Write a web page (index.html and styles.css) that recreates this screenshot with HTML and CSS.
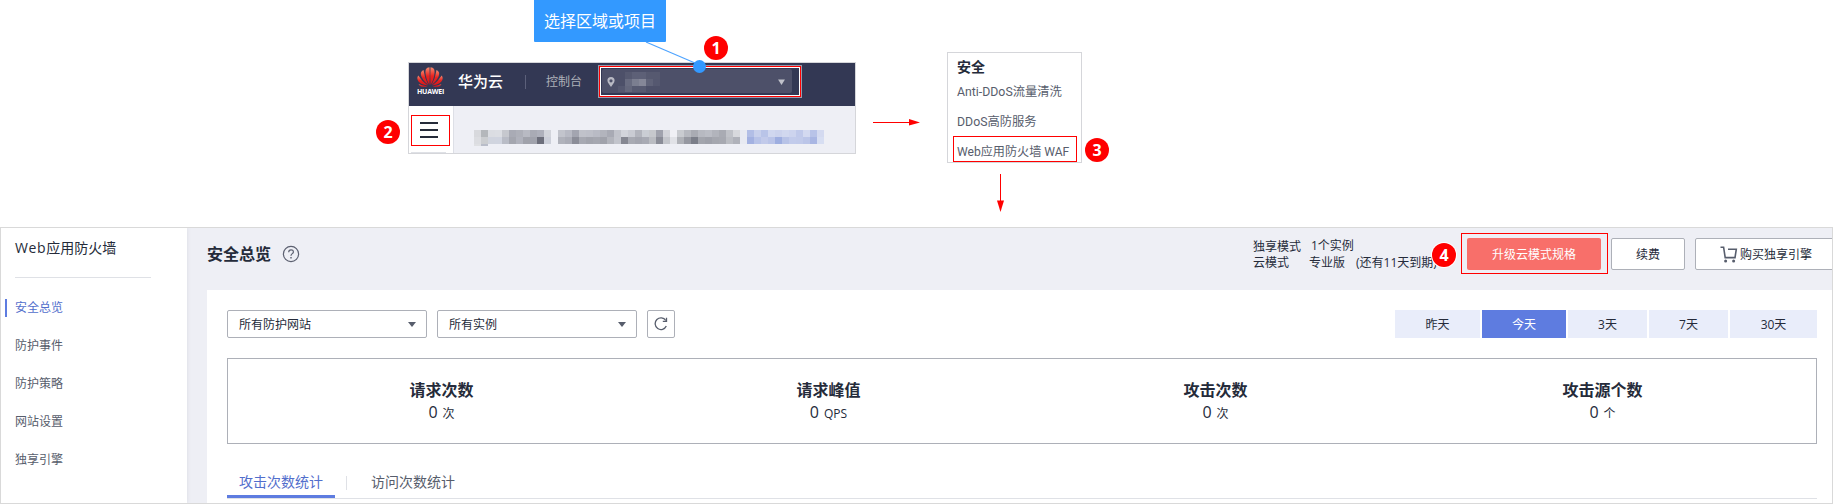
FILE: index.html
```html
<!DOCTYPE html>
<html lang="zh-CN">
<head>
<meta charset="utf-8">
<title>Web应用防火墙</title>
<link rel="stylesheet" href="styles.css">
</head>
<body>
<section class="guide">
  <div class="console">
    <header class="console-bar">
      <div class="brand">
        <svg class="petals" width="26" height="20" viewBox="0 0 26 20">
          <defs><linearGradient id="red" x1="0" y1="0" x2="0" y2="1"><stop offset="0" stop-color="#f58a70"/><stop offset=".5" stop-color="#e8231f"/><stop offset="1" stop-color="#d8151b"/></linearGradient></defs>
          <g fill="url(#red)">
            <path d="M12.4 18C9 12 7.600 5 9 2Q10 .4 12.500 .3Q13 10 12.400 18Z"/>
            <path d="M13.600 18C17 12 18.400 5 17 2Q16 .4 13.500 .3Q13 10 13.600 18Z"/>
            <path d="M11.500 18.200C6.500 14 3 9 4 5.500Q4.700 3.600 6.500 3Q7.500 11 11.500 18.200Z"/>
            <path d="M14.500 18.200C19.500 14 23 9 22 5.500Q21.300 3.600 19.500 3Q18.500 11 14.500 18.200Z"/>
            <path d="M10.800 18.600C4 17.500 .2 14.500 .3 11Q.4 9.500 1.300 8.500Q5 14.500 10.800 18.600Z"/>
            <path d="M15.200 18.600C22 17.500 25.800 14.500 25.700 11Q25.600 9.500 24.700 8.500Q21 14.500 15.200 18.600Z"/>
            <path d="M10.500 19.200C6 20.300 3 20 1.600 17.200Q6 18.800 10.500 19.200Z"/>
            <path d="M15.500 19.200C20 20.300 23 20 24.400 17.200Q20 18.800 15.500 19.200Z"/>
          </g>
        </svg>
        <span class="brand-name">HUAWEI</span>
      </div>
      <b class="cloud">华为云</b>
      <i class="bar-line"></i>
      <span class="console-link">控制台</span>
      <div class="region-frame">
        <div class="region">
          <svg width="8" height="10" viewBox="0 0 8 10"><path fill="#b9bac4" fill-rule="evenodd" d="M4 0a3.600 3.600 0 0 0-3.600 3.600C.4 6 2.800 8 4 10c1.200-2 3.600-4 3.600-6.400A3.600 3.600 0 0 0 4 0Zm0 2.200a1.600 1.600 0 1 1 0 3.200a1.600 1.600 0 0 1 0-3.200Z"/></svg>
          <svg class="region-blur" width="42" height="20" viewBox="0 0 42 20">
            <path fill="#565970" d="M7 0h35v7H7z"/><path fill="#5d6077" d="M14 0h14v7H14z"/>
            <path fill="#686b80" d="M7 7h7v7H7z"/><path fill="#7b7e90" d="M14 7h7v7h-7z"/><path fill="#858798" d="M21 7h7v7h-7z"/><path fill="#5f6278" d="M28 7h7v7h-7z"/><path fill="#555870" d="M35 7h7v7h-7zM0 14h7v6H0z"/><path fill="#64677c" d="M7 14h7v6H7z"/><path fill="#575a71" d="M14 14h14v6H14z"/>
          </svg>
          <svg class="region-caret" width="8" height="7" viewBox="0 0 8 7"><path fill="#c0c1ca" d="M0 .5h8L4 7z"/></svg>
        </div>
      </div>
    </header>
    <div class="console-body">
      <div class="console-side">
        <div class="menu"><i></i><i></i><i></i></div>
        <div class="side-line"></div>
      </div>
      <div class="console-main"><svg id="mosaic" width="350" height="16"></svg></div>
    </div>
  </div>

  <svg class="arrow-right" width="47" height="8" viewBox="0 0 47 8"><path d="M0 4.500h37" stroke="#f00"/><path d="M36 1l11 3.500L36 7.500z" fill="#f00"/></svg>

  <div class="service">
    <div class="service-card">
      <b>安全</b>
      <span>Anti-DDoS流量清洗</span>
      <span>DDoS高防服务</span>
      <span class="picked">Web应用防火墙 WAF</span>
    </div>
    <svg class="arrow-down" width="8" height="38" viewBox="0 0 8 38"><path d="M4.500 0v28" stroke="#f00"/><path d="M1 26.500h7L4.500 38z" fill="#f00"/></svg>
  </div>

  <div class="callout">选择区域或项目</div>
  <svg class="pointer" width="64" height="34" viewBox="0 0 64 34"><path d="M1 2L50 23" stroke="#4da3ff" stroke-width="1.100"/><circle cx="54.500" cy="26.500" r="6.500" fill="#39f"/></svg>
  <span class="badge one">1</span>
  <span class="badge two">2</span>
  <span class="badge three">3</span>
</section>

<section class="app">
  <nav class="side">
    <h2><span>Web</span>应用防火墙</h2>
    <a class="on">安全总览</a><a>防护事件</a><a>防护策略</a><a>网站设置</a><a>独享引擎</a>
  </nav>
  <main class="main">
    <header class="top">
      <h1>安全总览</h1>
      <svg class="help" width="18" height="18" viewBox="0 0 18 18" fill="none" stroke="#5c6070" stroke-width="1.200"><circle cx="9" cy="9" r="7.600"/><path d="M6.700 7.200c0-3.200 4.700-3.100 4.700-.3c0 1.800-2.400 1.700-2.400 3.800"/><path d="M9 12v1.400" stroke-width="1.400"/></svg>
      <div class="plan">
        <div class="plan-row up"><span>独享模式</span><em>1个实例</em></div>
        <div class="plan-row"><span>云模式</span><em>专业版</em><em>(还有11天到期)</em></div>
        <span class="badge four">4</span>
      </div>
      <div class="upgrade-frame"><button class="upgrade">升级云模式规格</button></div>
      <button class="btn renew">续费</button>
      <button class="btn buy"><svg width="18" height="17" viewBox="0 0 18 17" fill="none" stroke="#575d6c" stroke-width="1.600"><path d="M.5 1.200H3.600L5.200 11.600H15L16.300 3.300H8"/><g fill="#575d6c" stroke="none"><circle cx="5.600" cy="15" r="1.500"/><circle cx="13.600" cy="15" r="1.500"/></g></svg>购买独享引擎</button>
    </header>
    <div class="panel">
      <div class="filters">
        <div class="select">所有防护网站<i></i></div>
        <div class="select">所有实例<i></i></div>
        <div class="refresh"><svg width="14" height="14" viewBox="0 0 14 14" fill="none" stroke="#575d6c" stroke-width="1.300"><path d="M11.800 3.500A5.800 5.800 0 1 0 12.300 9"/><path d="M12.500 .8V4.300H8.800"/></svg></div>
        <div class="days"><span>昨天</span><span class="on">今天</span><span>3天</span><span>7天</span><span>30天</span></div>
      </div>
      <div class="stats">
        <div><b>请求次数</b><p>0<small>次</small></p></div>
        <div><b>请求峰值</b><p>0<small>QPS</small></p></div>
        <div><b>攻击次数</b><p>0<small>次</small></p></div>
        <div><b>攻击源个数</b><p>0<small>个</small></p></div>
      </div>
      <div class="tabs"><span class="on">攻击次数统计</span><i></i><span>访问次数统计</span></div>
    </div>
  </main>
</section>
<script src="mosaic.js"></script>
</body>
</html>
```
FILE: styles.css
```css
* { box-sizing: border-box; }
body {
  margin: 0; width: 1833px; height: 504px; overflow: hidden; background: #fff;
  font: 12px/16px "Open Sans", "Noto Sans CJK SC", sans-serif; color: #252b3a;
  display: flex; flex-direction: column;
}
svg { display: block; flex: none; }
h1, h2, p { margin: 0; }
em { font-style: normal; }
button { font: inherit; padding: 0; }

/* Steps */
.guide { position: relative; height: 227px; display: flex; padding-left: 408px; align-items: flex-start; }
.console { width: 448px; height: 92px; margin-top: 62px; border: 1px solid #d5d6da; display: flex; flex-direction: column; }
.console-bar { height: 43px; background: #333854; display: flex; padding-left: 8px; color: #fff; flex: none; }
.brand { width: 27px; margin-top: 4px; }
.brand-name { display: block; font: bold 7px/8px "Open Sans", sans-serif; letter-spacing: -.25px; margin-top: 1px; }
.cloud { margin: 8px 1px 0 14px; font-size: 15px; line-height: 20px; width: 46px; font-weight: 500; }
.bar-line { width: 1px; height: 14px; background: #5c607a; margin: 12px 20px 0; }
.console-link { color: #adb0b8; margin-top: 11px; width: 37px; }
.region-frame { width: 204px; height: 33px; margin: 2px 0 0 15px; border: 1px solid #989bac; display: flex; padding: 3px; box-shadow: inset 0 0 0 1px #f00, inset 0 0 0 2px #fff; }
.region { width: 190px; height: 24px; background: #4d5069; border-radius: 2px; display: flex; align-items: center; padding: 1px 7px 0 5px; }
.region-blur { margin: 0 auto 0 3px; }
.region-caret { width: 7px; height: 6px; }
.console-body { flex: 1; display: flex; background: #eeeff5; }
.console-side { width: 45px; background: #fff; border-right: 1px solid #dddfe6; padding: 9px 0 0 2px; display: flex; flex-direction: column; }
.menu { width: 39px; height: 31px; border: 1px solid #f00; display: flex; flex-direction: column; gap: 5px; padding: 6px 0 0 8px; }
.menu i { width: 18px; height: 2px; background: #252b3a; }
.side-line { width: 35px; height: 1px; background: #dfe1e6; margin-top: 6px; }
.console-main { padding: 24px 0 0 20px; }
.arrow-right { margin: 118px 27px 0 17px; }
.service { margin-top: 52px; }
.service-card { width: 135px; height: 111px; border: 1px solid #d5d6da; display: flex; flex-direction: column; font-family: Roboto, "Noto Sans CJK SC", sans-serif; color: #575d6c; padding-left: 5px; white-space: nowrap; }
.service-card b { font-size: 14px; line-height: 20px; color: #252b3a; margin: 4px 0 4px 4px; }
.service-card span { font-size: 12.3px; line-height: 22px; height: 22px; margin: 0 0 8px 4px; }
.service-card .picked { border: 1px solid #f00; width: 124px; height: 26px; line-height: 24px; margin: -5px 0 0; padding: 3px 0 0 3px; font-size: 12.1px; }
.arrow-down { margin: 11px 0 0 49px; }
.callout { position: absolute; left: 534px; top: 0; width: 132px; height: 42px; background: #39f; color: #fff; font: 16px/41px "Noto Sans CJK SC", sans-serif; text-align: center; border-radius: 0 0 1px 1px; }
.pointer { position: absolute; left: 645px; top: 40px; }
.badge { position: absolute; width: 24px; height: 24px; border-radius: 50%; background: #f00; color: #fff; font: bold 16px/25px "Open Sans", sans-serif; text-align: center; }
.one { left: 704px; top: 36px; }
.two { left: 376px; top: 120px; }
.three { left: 1085px; top: 138px; }

/* Application */
.app { height: 277px; border: 1px solid #d9d9d9; display: flex; overflow: hidden; }
.side { width: 186px; flex: none; background: #fff; display: flex; flex-direction: column; box-shadow: 0 0 4px #d8dae2; z-index: 1; }
.side h2 { font-size: 14px; line-height: 20px; font-weight: 400; margin: 10px 0 21px 14px; padding-bottom: 19px; width: 136px; border-bottom: 1px solid #dfe1e6; }
.side h2 span { letter-spacing: .6px; }
.side a { height: 18px; line-height: 18px; color: #575d6c; margin: 0 0 20px 4px; padding-left: 8px; border-left: 2px solid transparent; }
.side .on { color: #526ecc; border-color: #5e7ce0; }
.main { flex: 1; min-width: 0; background: #eeeff5; padding-left: 20px; }
.top { height: 62px; display: flex; align-items: flex-start; }
.top h1 { font-size: 16px; line-height: 24px; font-weight: 700; margin-top: 14px; width: 64px; flex: none; white-space: nowrap; }
.help { margin: 17px 0 0 11px; }
.plan { position: relative; margin: 10px 0 0 953px; width: 208px; flex: none; white-space: nowrap; }
.plan-row { display: flex; }
.plan-row span { width: 56px; flex: none; }
.plan-row em + em { margin-left: 11px; }
.plan-row.up { height: 17px; }
.plan-row.up span { width: 58px; padding-top: 1px; }
.plan .four { left: 179px; top: 5px; box-shadow: 0 0 0 1px #fff; }
.upgrade-frame { width: 147px; height: 41px; border: 1px solid #f00; margin-top: 5px; padding: 4px 5px; flex: none; }
.upgrade { width: 134px; height: 32px; border: 0; border-radius: 2px; background: #f86f6a; color: #fff; padding-top: 1px; }
.btn { height: 32px; margin-top: 10px; background: #fff; border: 1px solid #adb0b8; border-radius: 2px; color: #252b3a; flex: none; padding-top: 1px; }
.renew { width: 74px; margin-left: 3px; }
.buy { width: 160px; margin-left: 10px; display: flex; align-items: center; padding-left: 24px; gap: 2px; }
.panel { height: 214px; background: #fff; padding: 20px 15px 0 20px; }
.filters { display: flex; height: 28px; gap: 10px; }
.select { width: 200px; border: 1px solid #adb0b8; border-radius: 2px; display: flex; justify-content: space-between; align-items: center; padding: 1px 10px 0 11px; }
.select i { border: 4px solid transparent; border-top: 5px solid #575d6c; border-bottom: 0; }
.refresh { width: 28px; border: 1px solid #adb0b8; border-radius: 2px; display: flex; align-items: center; justify-content: center; }
.days { margin-left: auto; display: grid; grid-template-columns: 85px 84px 79px 79px 87px; gap: 2px; line-height: 29px; text-align: center; }
.days span { background: #e9edfa; height: 28px; }
.days .on { background: #5e7ce0; color: #fff; }
.stats { height: 86px; margin-top: 20px; border: 1px solid #adb0b8; display: grid; grid-template-columns: repeat(4, 387px); padding: 19px 0 0 20px; text-align: center; }
.stats b { display: block; font-size: 16px; line-height: 24px; font-weight: 700; }
.stats p { font-size: 16px; line-height: 20px; }
.stats small { font-size: 12px; margin-left: 5px; }
.tabs { height: 35px; margin-top: 20px; border-bottom: 1px solid #dfe1e6; display: flex; font-size: 14px; line-height: 35px; color: #575d6c; }
.tabs .on { color: #526ecc; border-bottom: 3px solid #5e7ce0; width: 108px; padding-left: 12px; height: 34px; }
.tabs i { width: 1px; height: 14px; background: #dfe1e6; margin: 12px 24px 0 11px; }
```
FILE: mosaic.js
```js
// Redacted breadcrumb: rows of 7px cells, "-" leaves a cell empty.
const rows = [
  'd8d9dd b4b7bb dbdde2 dcdee3 c6c8ce a9abb5 aeb0b9 b8bac3 a9abb5 aeb0bb d2d4db - c2c4cc b8bac4 a3a5b0 c0c2ca bec0c9 b9bbc5 b2b4bd a8aab4 c1c3cb d2d4db c9cbd3 b2b4bd cacdd4 c6c8cd a0a2ad d3d4da f0f0f5 c9cbd0 b7b9c0 a9abb3 b7b9c1 bbbdc5 b2b4bc a9abb3 c0c2c8 d8d9dd e8eaf2 b2bee6 c8d0ec b9c4e8 d0d7ef ccd3ed d1d8ef cdd4ee c0c9ea d3d9f0 b8c3e8 d4daf0',
  'dcdde1 cbcdd0 d0d4de d0d4df b9bcc6 a4a6af b0b2bc a0a2ab a0a2ac 6c6e7b cccfd9 - b0b2bb aaacb6 8b8d98 a7a9b2 a2a4ad a5a7b0 a0a2ab b2b4bc c2c4cc 858792 a8aab3 a3a5af a8aab4 babcc2 8a8c97 c4c6cc e1e2e7 b0b2b8 9698a1 7b7e89 a3a5ad 9fa1aa a5a7af a7a9b1 bbbdc3 b0b2ba e8eaf2 a3b1e1 b8c3e8 c2caea bac4e8 9eaee0 b8c3e7 c2cbeb c1caea bbc5e8 a9b6e3 d7def2',
  'dfe0e3 b9bdc9'
];
const svg = document.getElementById('mosaic');
rows.forEach((row, y) => row.split(' ').forEach((color, x) => {
  if (color === '-') return;
  const cell = document.createElementNS('http://www.w3.org/2000/svg', 'rect');
  cell.setAttribute('x', x * 7);
  cell.setAttribute('y', y * 7);
  cell.setAttribute('width', 7);
  cell.setAttribute('height', 7);
  cell.setAttribute('fill', '#' + color);
  svg.append(cell);
}));
```
